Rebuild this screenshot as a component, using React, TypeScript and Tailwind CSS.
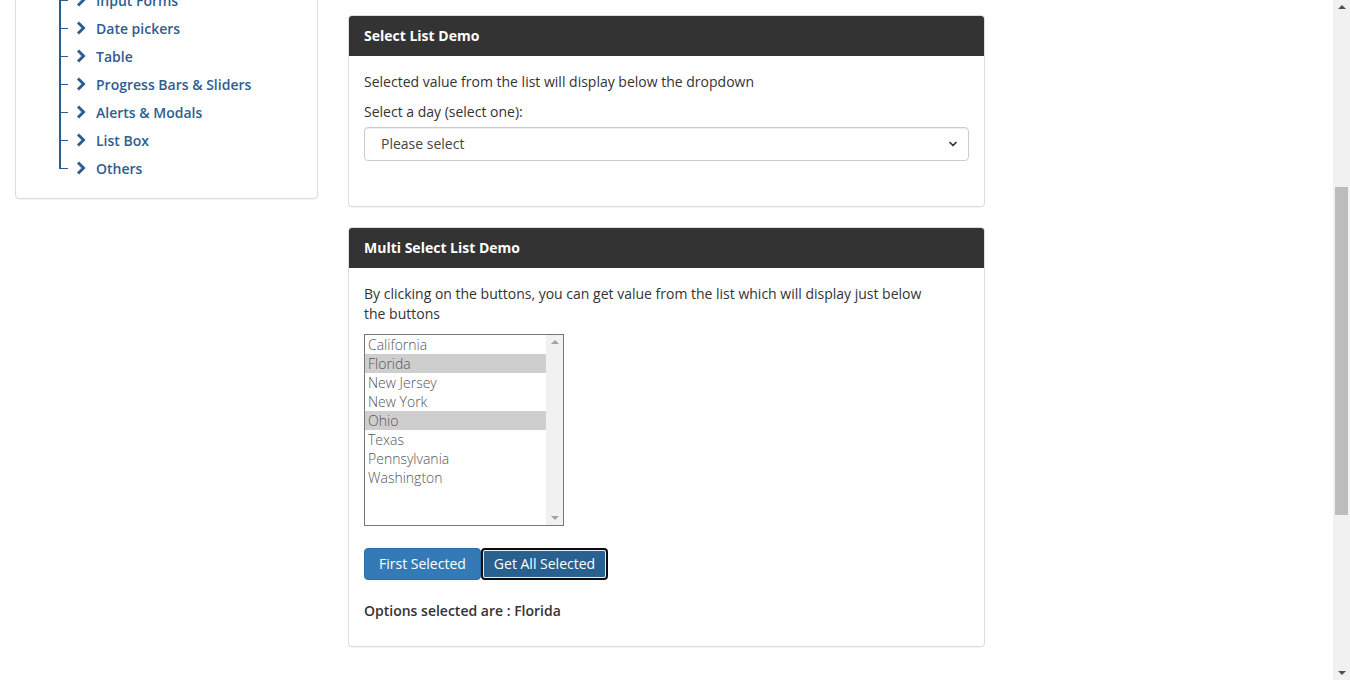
import React from 'react';
import { ChevronDown } from 'lucide-react';

const menuItems = [
  'Input Forms',
  'Date pickers',
  'Table',
  'Progress Bars & Sliders',
  'Alerts & Modals',
  'List Box',
  'Others',
];

const states = [
  { name: 'California', selected: false },
  { name: 'Florida', selected: true },
  { name: 'New Jersey', selected: false },
  { name: 'New York', selected: false },
  { name: 'Ohio', selected: true },
  { name: 'Texas', selected: false },
  { name: 'Pennsylvania', selected: false },
  { name: 'Washington', selected: false },
];

const font = "font-['Open_Sans','Lato',sans-serif]";

// heavy chevron like the font-awesome one
const Chevron: React.FC = () => (
  <svg width="10" height="14" viewBox="0 0 10 14" className="text-[#2f5d8f]">
    <path d="M2 1.5 L7.5 7 L2 12.5" fill="none" stroke="currentColor" strokeWidth="3" strokeLinejoin="miter" />
  </svg>
);

const Sidebar: React.FC = () => (
  <div className="w-[303px] shrink-0">
    <div className="mt-[-40px] border border-[#ddd] rounded-[4px] bg-white pt-[25px] pb-[16px] shadow-[0_1px_1px_rgba(0,0,0,0.05)]">
      <ul className="ml-[43px]">
        {menuItems.map((item, i) => {
          const last = i === menuItems.length - 1;
          return (
            <li key={item} className="relative h-[28px] flex items-center pl-[17px]">
              <span
                className={`absolute left-0 top-0 w-[1.5px] bg-[#2f5d8f] ${last ? 'h-[14px]' : 'h-[28px]'}`}
              />
              <span className="absolute left-0 top-[13.5px] w-[9px] h-[1.5px] bg-[#2f5d8f]" />
              <Chevron />
              <span className="ml-[10px] text-[14px] font-semibold text-[#2f5d8f]">{item}</span>
            </li>
          );
        })}
      </ul>
    </div>
  </div>
);

const Panel: React.FC<{ title: string; children: React.ReactNode }> = ({ title, children }) => (
  <div className="border border-[#ddd] rounded-[4px] bg-white shadow-[0_1px_1px_rgba(0,0,0,0.05)]">
    <div className="h-[40px] bg-[#333] rounded-t-[3px] flex items-center px-[15px]">
      <h3 className="text-white text-[14px] font-bold leading-[20px] -mt-[1px]">{title}</h3>
    </div>
    {children}
  </div>
);

const SelectListDemo: React.FC = () => (
  <Panel title="Select List Demo">
    <div className="px-[15px] pt-[16px] pb-[45px] text-[14px] text-[#333] leading-[20px]">
      <p>Selected value from the list will display below the dropdown</p>
      <p className="mt-[10px]">Select a day (select one):</p>
      <div className="mt-[5px] h-[34px] border border-[#ccc] rounded-[4px] flex items-center justify-between pl-[16px] pr-[9px] shadow-[inset_0_1px_1px_rgba(0,0,0,0.075)]">
        <span className="text-[#444]">Please select</span>
        <ChevronDown className="w-[12px] h-[12px] text-[#333]" strokeWidth={3.5} />
      </div>
    </div>
  </Panel>
);

const MultiSelectDemo: React.FC = () => (
  <Panel title="Multi Select List Demo">
    <div className="px-[15px] pt-[16px] pb-[25px] text-[14px] text-[#333] leading-[20px]">
      <p className="pr-[36px]">By clicking on the buttons, you can get value from the list which will display just below the buttons</p>
      <div className="mt-[10px] w-[200px] h-[192px] border border-[#777] flex">
        <ul className="flex-1">
          {states.map((s) => (
            <li
              key={s.name}
              className={`h-[19px] leading-[19px] pl-[3px] font-light text-[#555] ${s.selected ? 'bg-[#cecece]' : ''}`}
            >
              {s.name}
            </li>
          ))}
        </ul>
        <div className="w-[17px] bg-[#f1f1f1] flex flex-col justify-between items-center py-[5px]">
          <span className="w-0 h-0 border-l-[4px] border-r-[4px] border-b-[4px] border-l-transparent border-r-transparent border-b-[#a3a3a3]" />
          <span className="w-0 h-0 border-l-[4px] border-r-[4px] border-t-[4px] border-l-transparent border-r-transparent border-t-[#a3a3a3]" />
        </div>
      </div>
      <div className="mt-[22px] flex">
        <button className="h-[32px] px-[14px] bg-[#337ab7] border border-[#2e6da4] rounded-[4px] text-white text-[14px]">
          First Selected
        </button>
        <button className="h-[32px] px-[11px] bg-[#286090] border-2 border-[#0b0b0b] rounded-[4px] text-white text-[14px] outline outline-1 outline-[#e8eef5] outline-offset-[-3px]">
          Get All Selected
        </button>
      </div>
      <p className="mt-[21px] font-semibold">Options selected are : Florida</p>
    </div>
  </Panel>
);

const FakeScrollbar: React.FC = () => (
  <div className="w-[17px] shrink-0 bg-[#f1f1f1] flex flex-col items-center">
    <span className="mt-[5px] w-0 h-0 border-l-[4px] border-r-[4px] border-b-[4px] border-l-transparent border-r-transparent border-b-[#505050]" />
    <div className="mt-[178px] w-[13px] h-[328px] bg-[#bcbcbc]" />
    <div className="flex-1" />
    <span className="mb-[5px] w-0 h-0 border-l-[4px] border-r-[4px] border-t-[4px] border-l-transparent border-r-transparent border-t-[#505050]" />
  </div>
);

export default function App() {
  return (
    <div className={`h-[680px] w-[1350px] flex overflow-hidden bg-white ${font}`}>
      <div className="flex-1 flex pl-[15px] gap-[30px]">
        <Sidebar />
        <div className="w-[637px] pt-[15px] flex flex-col gap-[20px]">
          <SelectListDemo />
          <MultiSelectDemo />
        </div>
      </div>
      <FakeScrollbar />
    </div>
  );
}
